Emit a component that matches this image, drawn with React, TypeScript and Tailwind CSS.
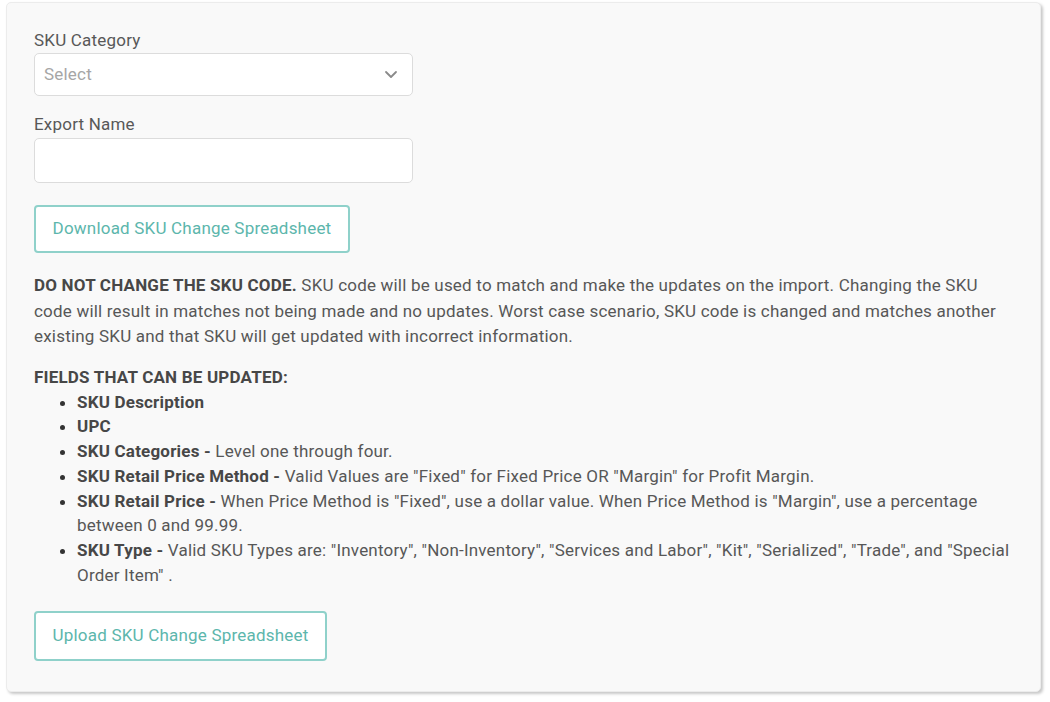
import React from "react";

export default function App() {
  return (
    <div className="min-h-[702px] w-[1050px] bg-white pl-[6px] pt-[2px]" style={{ fontFamily: "Roboto, 'Liberation Sans', sans-serif" }}>
      <div className="w-[1035px] h-[690px] rounded-[5px] bg-[#f9f9f9] border border-[#ececec] shadow-[2px_2px_3px_rgba(0,0,0,0.22)] pl-[27px] pr-[30px] pt-[27px] text-[17px] tracking-[0.2px] text-[#575757]">
        <div className="leading-[20px] text-[#585858]">SKU Category</div>
        <div className="mt-[3px] w-[379px] h-[43px] rounded-[5px] border border-[#dcdcdc] bg-white flex items-center justify-between pl-[9px] pr-[14px]">
          <span className="text-[#a6a6a6]">Select</span>
          <svg width="14" height="9" viewBox="0 0 14 9" fill="none">
            <path d="M2 2l5 5 5-5" stroke="#8a8a8a" strokeWidth="1.8" strokeLinecap="round" strokeLinejoin="round" />
          </svg>
        </div>
        <div className="mt-[18px] leading-[20px] text-[#585858]">Export Name</div>
        <div className="mt-[4px] w-[379px] h-[45px] rounded-[5px] border border-[#dcdcdc] bg-white" />
        <button className="mt-[22px] w-[316px] h-[48px] rounded-[4px] border-2 border-[#8fd1ca] bg-white text-[#5cb6ac] text-[17px] tracking-[0.2px] flex items-center justify-center">
          Download SKU Change Spreadsheet
        </button>
        <p className="mt-[20px] leading-[25.5px]">
          <b className="font-bold text-[#474747]">DO NOT CHANGE THE SKU CODE.</b> SKU code will be used to match and make the updates on the import. Changing the SKU code will result in matches not being made and no updates. Worst case scenario, SKU code is changed and matches another existing SKU and that SKU will get updated with incorrect information.
        </p>
        <div className="mt-[15px] leading-[25px] font-bold text-[#474747]">FIELDS THAT CAN BE UPDATED:</div>
        <ul className="list-disc pl-[43px] leading-[24.8px] marker:text-[#333]">
          <li><b className="font-bold text-[#474747]">SKU Description</b></li>
          <li><b className="font-bold text-[#474747]">UPC</b></li>
          <li><b className="font-bold text-[#474747]">SKU Categories -</b> Level one through four.</li>
          <li><b className="font-bold text-[#474747]">SKU Retail Price Method -</b> Valid Values are "Fixed" for Fixed Price OR "Margin" for Profit Margin.</li>
          <li><b className="font-bold text-[#474747]">SKU Retail Price -</b> When Price Method is "Fixed", use a dollar value. When Price Method is "Margin", use a percentage between 0 and 99.99.</li>
          <li><b className="font-bold text-[#474747]">SKU Type -</b> Valid SKU Types are: "Inventory", "Non-Inventory", "Services and Labor", "Kit", "Serialized", "Trade", and "Special Order Item" .</li>
        </ul>
        <button className="mt-[23px] w-[293px] h-[50px] rounded-[4px] border-2 border-[#8fd1ca] bg-white text-[#5cb6ac] text-[17px] tracking-[0.2px] flex items-center justify-center">
          Upload SKU Change Spreadsheet
        </button>
      </div>
    </div>
  );
}
